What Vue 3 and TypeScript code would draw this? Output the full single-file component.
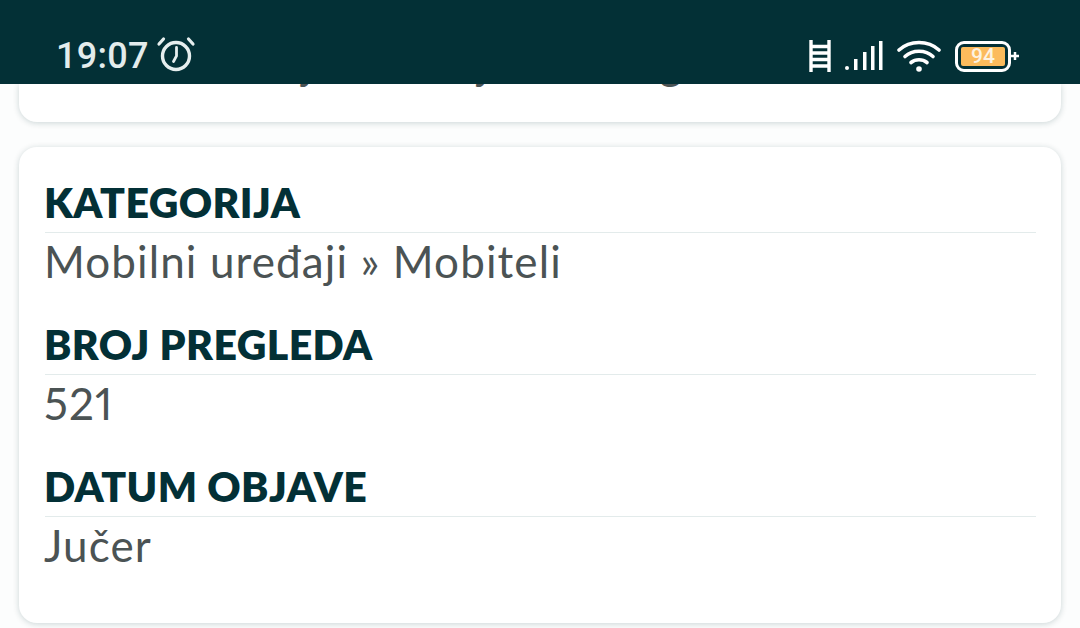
<script setup lang="ts">
const rows = [
  { label: 'KATEGORIJA', value: 'Mobilni uređaji » Mobiteli' },
  { label: 'BROJ PREGLEDA', value: '521' },
  { label: 'DATUM OBJAVE', value: 'Jučer' },
]
</script>

<template>
  <div class="screen">
    <main class="content">
      <section class="card top">
        <p class="clipped">Odlično stanje kakav je i bez ogrebotina</p>
      </section>
      <section class="card info">
        <div v-for="row in rows" :key="row.label" class="row">
          <h3>{{ row.label }}</h3>
          <p>{{ row.value }}</p>
        </div>
      </section>
    </main>
    <header class="statusbar">
      <div class="left">
        <span class="time">19:07</span>
        <svg class="alarm" width="40" height="36" viewBox="0 0 40 36" fill="none" stroke="#e6eeee" stroke-linecap="round">
          <circle cx="20" cy="20" r="13.500" stroke-width="3.400" />
          <path d="M20.500 11.500V20L17.500 25.500" stroke-width="2.800" />
          <path d="M3 8L7.500 3M37 8L32.500 3" stroke-width="3.200" />
        </svg>
      </div>
      <div class="right">
        <svg width="22" height="32" viewBox="0 0 22 32" fill="none" stroke="#fff" stroke-width="3.400">
          <path d="M2 0V32M20 0V32M2 6.500H20M2 13H20M2 19.500H20M2 26H20" />
        </svg>
        <svg class="signal" width="38" height="32" viewBox="0 0 38 32" fill="#fff">
          <rect x="0" y="26" width="4" height="4" rx="2" />
          <rect x="9" y="19" width="3.500" height="11" />
          <rect x="18" y="12" width="3.500" height="18" />
          <rect x="26" y="6" width="3.500" height="24" />
          <rect x="34" y="1" width="3.500" height="29" />
        </svg>
        <svg class="wifi" width="44" height="34" viewBox="0 0 44 34" fill="none" stroke="#fff" stroke-width="3.600" stroke-linecap="round">
          <path d="M2 11C13 1 31 1 42 11" />
          <path d="M8 17.500C15.500 10.500 28.500 10.500 36 17.500" />
          <path d="M14 23.500C18.500 19.800 25.500 19.800 30 23.500" />
          <circle cx="22" cy="30" r="2.800" fill="#fff" stroke="none" />
        </svg>
        <div class="battery">
          <div class="shell"><span class="level">94</span></div>
          <svg width="8" height="14" viewBox="0 0 8 14" fill="none" stroke="#fff" stroke-width="2.500">
            <path d="M0 7H8M4 3V11" />
          </svg>
        </div>
      </div>
    </header>
  </div>
</template>

<style>
html,
body {
  margin: 0;
  overflow: hidden;
}
</style>

<style scoped>
.screen {
  position: relative;
  width: 1080px;
  height: 628px;
  overflow: hidden;
  background: #fcfdfd;
  font-family: Lato, "Liberation Sans", sans-serif;
}

.statusbar {
  position: absolute;
  top: 0;
  left: 0;
  right: 0;
  height: 84px;
  box-sizing: border-box;
  background: #033036;
  padding: 33px 61px 0 56px;
  display: flex;
  justify-content: space-between;
  align-items: flex-start;
}

.left {
  display: flex;
  align-items: center;
  gap: 7px;
}

.time {
  font-family: Roboto, sans-serif;
  font-size: 36px;
  line-height: 46px;
  font-weight: 500;
  color: #e3ecec;
  letter-spacing: 0.3px;
}

.alarm {
  margin-top: -4px;
}

.right {
  display: flex;
  align-items: center;
  gap: 14px;
  padding-top: 6px;
}

.battery {
  display: flex;
  align-items: center;
}

.shell {
  width: 56px;
  height: 31px;
  box-sizing: border-box;
  border: 3.500px solid #fff;
  border-radius: 9px;
  padding: 3px;
  display: flex;
}

.level {
  flex: 1;
  background: #fcbb5c;
  border-radius: 2px;
  color: #fdf3e2;
  font-family: Roboto, sans-serif;
  font-size: 21px;
  font-weight: 500;
  line-height: 18px;
  text-align: center;
}

.content {
  padding: 84px 19px 0;
  display: flex;
  flex-direction: column;
  gap: 25px;
}

.card {
  background: #fff;
  border-radius: 18px;
  box-shadow: 0 1px 6px rgba(3, 48, 54, 0.2);
}

.top {
  height: 38px;
  border-radius: 0 0 18px 18px;
  overflow: hidden;
}

.clipped {
  margin: -47px 0 0 26px;
  font-size: 44px;
  line-height: 50px;
  letter-spacing: 1.100px;
  color: #4b5354;
  white-space: nowrap;
}

.info {
  height: 476px;
  box-sizing: border-box;
  padding: 30px 25px 0 26px;
  display: flex;
  flex-direction: column;
  gap: 30px;
}

h3 {
  margin: 0;
  height: 56px;
  box-sizing: border-box;
  border-bottom: 1px solid #e3ebeb;
  font-size: 41px;
  line-height: 52px;
  font-weight: 800;
  letter-spacing: 0.400px;
  color: #033036;
  text-indent: -1px;
}

p {
  margin: 0;
}

.row p {
  font-size: 44px;
  line-height: 56px;
  letter-spacing: 1.100px;
  color: #4b5354;
  text-indent: -1px;
  font-feature-settings: "pnum";
}
</style>
